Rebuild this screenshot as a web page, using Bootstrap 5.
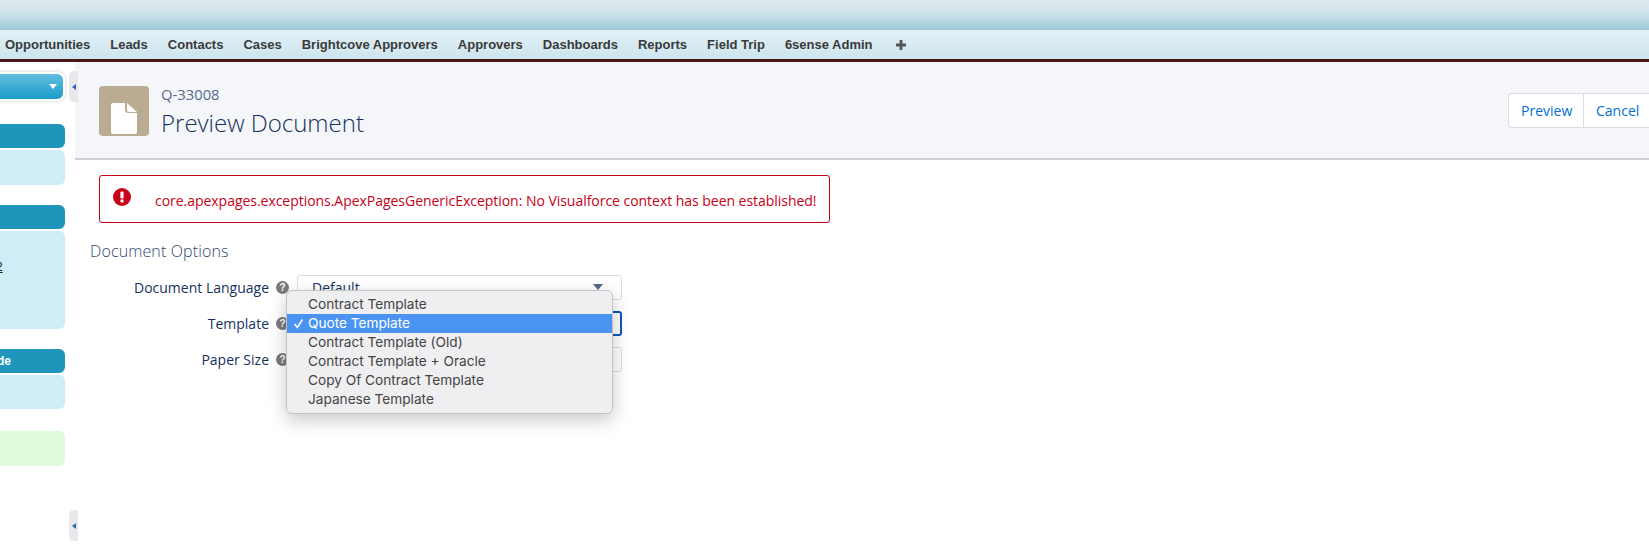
<!DOCTYPE html>
<html lang="en">
<head>
<meta charset="utf-8">
<title>Preview Document</title>
<link rel="stylesheet" href="https://cdn.jsdelivr.net/npm/bootstrap@5.3.0/dist/css/bootstrap.min.css">
<style>
html,body{height:100%;overflow:hidden}
body{width:1649px;height:550px;background:#fff;font-family:"Open Sans","Noto Sans",sans-serif;color:#16325c}
.sf-banner{height:30px;background:linear-gradient(#dde8ef 0,#dbe7ee 22%,#c4dfe9 55%,#9cc5d5 100%)}
.sf-tabs{height:32px;padding-left:5px;background:linear-gradient(#e2f0f5,#cde5ee);border-bottom:3px solid #4a1717;font:700 13px/29px "Liberation Sans",Arial,sans-serif;color:#3a3a3a;gap:20px}
.sf-tabs span{white-space:nowrap}
.sf-plus{margin-left:3px;width:10px;height:10px}
.sf-body{height:488px}
.sf-side{width:69px;flex:none;padding-top:12px;overflow:hidden}
.sf-pick{width:63px;height:25px;background:linear-gradient(#62bfdf,#1b9cca);border-radius:0 6px 6px 0;box-shadow:0 0 0 2px #fff,0 0 4px 2px rgba(0,0,0,.18);padding-right:6px;margin-bottom:25px}
.sf-caret{width:0;height:0;border-left:4px solid transparent;border-right:4px solid transparent;border-top:5px solid #fff}
.sf-head{width:65px;height:24px;background:#2095bc;border-radius:0 6px 6px 0;color:#fff;font:700 12px/24px "Liberation Sans",sans-serif;text-indent:-3px;margin-bottom:2px}
.sf-box{width:65px;background:#cfedf7;border-radius:0 6px 6px 0;margin-bottom:20px;font:12px "Liberation Sans",sans-serif;color:#222;text-indent:-4px}
.sf-green{background:#dffbdc;height:35px;margin-top:22px}
.sf-grip{width:9px;height:31px;background:#e8e8ec;border-radius:5px 0 0 5px;flex:none}
.sf-tri{width:0;height:0;border-top:3px solid transparent;border-bottom:3px solid transparent;border-right:4px solid #2f65b5}
.sf-rail{width:6px;flex:none;padding:9px 0;position:relative;z-index:1}
.sf-main{min-width:0}
.sf-pagehead{height:98px;background:#f4f6f9;border-bottom:2px solid #d0d0d6;padding:24px 0 0 24px}
.sf-icon{width:50px;height:50px;background:#baac93;border-radius:4px;margin-right:12px;padding-bottom:2px}
.sf-sub{font-size:14.8px;line-height:20px;color:#54698d;margin-top:-2px}
.sf-title{font-size:24px;line-height:32px;font-weight:300;color:#16325c;margin-top:3px}
.sf-btns{margin:7px 0 0 auto;height:35px;width:141px;flex:none;background:#fff;border:1px solid #d8dde6;border-right:0;border-radius:4px 0 0 4px;font-size:14px;color:#0070d2}
.sf-btns span{padding:0 12px;line-height:33px;display:block}
.sf-btns span:first-child{width:74px;flex:none;padding-right:0;padding-left:12px}
.sf-btns span+span{flex:none;border-left:1px solid #d8dde6}
.sf-err{width:731px;height:48px;margin:15px 0 0 24px;border:1px solid #c80018;border-radius:3px;color:#c80018;font-size:14px;padding-left:13px}
.sf-err svg{margin-right:24px;margin-top:-4px}
.sf-err span{margin-top:2px;white-space:nowrap;letter-spacing:-.035px}
.sf-sec{font-size:16px;font-weight:300;color:#2f4a73;margin:16px 0 0 15px;line-height:24px;letter-spacing:.12px}
.sf-form{position:relative;width:560px;margin-top:12px}
.sf-row{height:25px;margin-bottom:11px}
.sf-lab{width:194px;text-align:right;font-size:14px;color:#16325c;flex:none;white-space:nowrap}
.sf-help{margin:0 8px 0 7px;flex:none}
.sf-sel{width:325px;height:25px;border:1px solid #d8dde6;border-radius:3px;padding-left:14px;font-size:14px;color:#16325c;line-height:23px;overflow:hidden;position:relative}
.sf-sel.sf-focus{border:2px solid #0b57c2}
.sf-arrow{position:absolute;right:18px;top:8px;width:0;height:0;border-left:5px solid transparent;border-right:5px solid transparent;border-top:6px solid #54698d}
.sf-menu{position:absolute;left:211px;top:15px;width:327px;height:124px;background:#efeff1;border:1px solid #c4c4c6;border-radius:6px;box-shadow:0 6px 18px rgba(0,0,0,.22);padding-top:4px;font:13.65px/19px Inter,"Liberation Sans",sans-serif;color:#444;z-index:5}
.sf-opt{height:19px;padding-left:21px;position:relative;white-space:nowrap}
.sf-opt.sf-on{background:#4b93f1;color:#fff}
.sf-check{position:absolute;left:6px;top:0}
</style>
</head>
<body>
<div class="sf-banner"></div>
<div class="sf-tabs d-flex">
<span>Opportunities</span><span>Leads</span><span>Contacts</span><span>Cases</span><span>Brightcove Approvers</span><span>Approvers</span><span>Dashboards</span><span>Reports</span><span>Field Trip</span><span>6sense Admin</span>
<svg class="sf-plus align-self-center" viewBox="0 0 10 10"><path d="M3.6 0h2.8v3.6H10v2.8H6.4V10H3.6V6.4H0V3.6h3.6z" fill="#555"/></svg>
</div>
<div class="sf-body d-flex">
<aside class="sf-side">
  <div class="sf-pick d-flex justify-content-end align-items-center"><div class="sf-caret"></div></div>
  <div class="sf-head"></div>
  <div class="sf-box" style="height:35px"></div>
  <div class="sf-head"></div>
  <div class="sf-box" style="height:98px;padding-top:29px"><u>2</u></div>
  <div class="sf-head">de</div>
  <div class="sf-box" style="height:34px"></div>
  <div class="sf-box sf-green"></div>
</aside>
<div class="sf-rail d-flex flex-column justify-content-between">
  <div class="sf-grip d-flex align-items-center justify-content-center"><div class="sf-tri"></div></div>
  <div class="sf-grip d-flex align-items-center justify-content-center"><div class="sf-tri"></div></div>
</div>
<main class="sf-main flex-grow-1">
  <header class="sf-pagehead d-flex">
    <div class="sf-icon d-flex align-items-end justify-content-center">
      <svg width="26" height="31" viewBox="0 0 26 31"><path d="M2 0h12v7a3 3 0 0 0 3 3h9v19a2 2 0 0 1-2 2H2a2 2 0 0 1-2-2V2a2 2 0 0 1 2-2z" fill="#fff"/><path d="M16 0l10 9h-8a2 2 0 0 1-2-2z" fill="#fff"/></svg>
    </div>
    <div>
      <div class="sf-sub">Q-33008</div>
      <div class="sf-title">Preview Document</div>
    </div>
    <div class="sf-btns d-flex"><span>Preview</span><span>Cancel</span></div>
  </header>
  <div class="sf-err d-flex align-items-center">
    <svg width="18" height="18" viewBox="0 0 18 18"><circle cx="9" cy="9" r="9" fill="#c80018"/><rect x="7.4" y="3.5" width="3.2" height="7" rx="1.2" fill="#fff"/><circle cx="9" cy="13" r="1.7" fill="#fff"/></svg>
    <span>core.apexpages.exceptions.ApexPagesGenericException: No Visualforce context has been established!</span>
  </div>
  <div class="sf-sec">Document Options</div>
  <div class="sf-form">
    <div class="sf-row d-flex align-items-center">
      <div class="sf-lab">Document Language</div>
      <svg class="sf-help" width="13" height="13" viewBox="0 0 13 13"><circle cx="6.5" cy="6.5" r="6.5" fill="#7a7a7a"/><text x="6.5" y="10" font-size="10" font-weight="700" font-family="Liberation Sans" text-anchor="middle" fill="#fff">?</text></svg>
      <div class="sf-sel">Default<div class="sf-arrow"></div></div>
    </div>
    <div class="sf-row d-flex align-items-center">
      <div class="sf-lab">Template</div>
      <svg class="sf-help" width="13" height="13" viewBox="0 0 13 13"><circle cx="6.5" cy="6.5" r="6.5" fill="#7a7a7a"/><text x="6.5" y="10" font-size="10" font-weight="700" font-family="Liberation Sans" text-anchor="middle" fill="#fff">?</text></svg>
      <div class="sf-sel sf-focus"></div>
    </div>
    <div class="sf-row d-flex align-items-center">
      <div class="sf-lab">Paper Size</div>
      <svg class="sf-help" width="13" height="13" viewBox="0 0 13 13"><circle cx="6.5" cy="6.5" r="6.5" fill="#7a7a7a"/><text x="6.5" y="10" font-size="10" font-weight="700" font-family="Liberation Sans" text-anchor="middle" fill="#fff">?</text></svg>
      <div class="sf-sel"></div>
    </div>
    <div class="sf-menu">
      <div class="sf-opt">Contract Template</div>
      <div class="sf-opt sf-on"><svg class="sf-check" width="11" height="19" viewBox="0 0 11 19"><path d="M1.5 10l2.8 3.5L9.5 5.5" fill="none" stroke="#fff" stroke-width="1.6"/></svg>Quote Template</div>
      <div class="sf-opt">Contract Template (Old)</div>
      <div class="sf-opt">Contract Template + Oracle</div>
      <div class="sf-opt">Copy Of Contract Template</div>
      <div class="sf-opt">Japanese Template</div>
    </div>
  </div>
</main>
</div>
</body>
</html>
